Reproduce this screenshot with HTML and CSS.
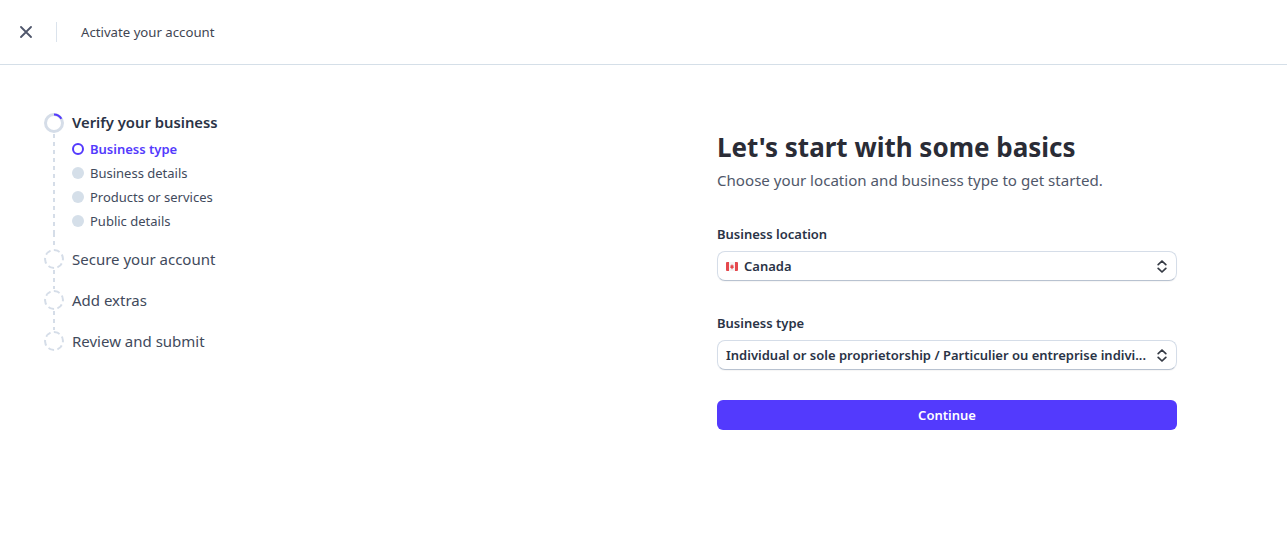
FILE: index.html
```html
<!DOCTYPE html>
<html lang="en">
<head>
    <meta charset="UTF-8">
    <title>Activate your account</title>
    <link rel="stylesheet" href="styles.css">
</head>
<body>

<!-- Top bar -->
<header class="topbar">
    <button class="close-btn" aria-label="Close">
        <svg width="12" height="12" viewBox="0 0 12 12"><path d="M1 1l10 10M11 1L1 11" stroke="#4f566b" stroke-width="1.8" stroke-linecap="round" fill="none"/></svg>
    </button>
    <div class="topbar-divider"></div>
    <span class="topbar-title">Activate your account</span>
</header>

<main class="layout">
    <!-- Steps -->
    <nav class="steps">
        <div class="step step-current">
            <svg class="step-icon" width="20" height="20" viewBox="0 0 20 20">
                <circle cx="10" cy="10" r="8.5" fill="none" stroke="#d5dde8" stroke-width="3"/>
                <path d="M10 1.5A8.5 8.5 0 0 1 17.4 5.8" fill="none" stroke="#533afd" stroke-width="2"/>
            </svg>
            <span class="step-label">Verify your business</span>
        </div>
        <div class="substeps">
            <div class="substep substep-active"><span class="ring"></span>Business type</div>
            <div class="substep"><span class="dot"></span>Business details</div>
            <div class="substep"><span class="dot"></span>Products or services</div>
            <div class="substep"><span class="dot"></span>Public details</div>
        </div>
        <div class="connector connector-short"></div>
        <div class="step">
            <span class="dashed-circle"></span>
            <span>Secure your account</span>
        </div>
        <div class="connector"></div>
        <div class="step">
            <span class="dashed-circle"></span>
            <span>Add extras</span>
        </div>
        <div class="connector"></div>
        <div class="step">
            <span class="dashed-circle"></span>
            <span>Review and submit</span>
        </div>
    </nav>

    <!-- Form -->
    <section class="form-panel">
        <h1>Let's start with some basics</h1>
        <p class="subtitle">Choose your location and business type to get started.</p>

        <div class="field">
            <label>Business location</label>
            <div class="select">
                <svg class="flag" width="12" height="9" viewBox="0 0 12 9">
                    <rect width="12" height="9" rx="1" fill="#f4f4f4"/>
                    <path d="M1 0h2v9H1a1 1 0 0 1-1-1V1a1 1 0 0 1 1-1zM9 0h2a1 1 0 0 1 1 1v7a1 1 0 0 1-1 1H9z" fill="#e5484d"/>
                    <path d="M6 2l.7 1.4.8-.3-.3 1.7.8-.2-.2.9-1.4.9v.9h-.8v-.9l-1.4-.9-.2-.9.8.2-.3-1.7.8.3z" fill="#e5484d"/>
                </svg>
                <span class="select-text">Canada</span>
                <svg class="chevrons" width="10" height="13" viewBox="0 0 10 13"><path d="M1.2 4.6L5 1l3.8 3.6M1.2 8.4L5 12l3.8-3.6" fill="none" stroke="#353a44" stroke-width="1.7" stroke-linecap="round" stroke-linejoin="round"/></svg>
            </div>
        </div>

        <div class="field">
            <label>Business type</label>
            <div class="select">
                <span class="select-text">Individual or sole proprietorship / Particulier ou entreprise indivi...</span>
                <svg class="chevrons" width="10" height="13" viewBox="0 0 10 13"><path d="M1.2 4.6L5 1l3.8 3.6M1.2 8.4L5 12l3.8-3.6" fill="none" stroke="#353a44" stroke-width="1.7" stroke-linecap="round" stroke-linejoin="round"/></svg>
            </div>
        </div>

        <button class="continue">Continue</button>
    </section>
</main>

</body>
</html>
```

FILE: styles.css
```css
* {
    box-sizing: border-box;
}
body {
    margin: 0;
    font-family: "Noto Sans", "Open Sans", sans-serif;
    background: #fff;
    color: #2a3346;
    overflow: hidden;
}

/* Top bar */
.topbar {
    display: flex;
    align-items: center;
    height: 65px;
    padding-left: 20px;
    border-bottom: 1px solid #d5dfe8;
}
.close-btn {
    display: flex;
    padding: 0;
    border: none;
    background: none;
}
.topbar-divider {
    width: 1px;
    height: 20px;
    margin: 0 24px;
    background: #dbe3ec;
}
.topbar-title {
    font-size: 13.2px;
    color: #414552;
}

.layout {
    display: flex;
    padding-left: 44px;
}

/* Steps */
.steps {
    width: 673px;
    padding-top: 47px;
}
.step {
    display: flex;
    align-items: center;
    gap: 8px;
    height: 22px;
    font-size: 15px;
    color: #414a5c;
}
.step-current {
    font-size: 14.8px;
    font-weight: 600;
    color: #2a3346;
}
.step-label {
    margin-bottom: 2px;
}
.step-icon {
    flex: none;
}
.dashed-circle {
    flex: none;
    width: 20px;
    height: 20px;
    border: 2px dashed #d5dde8;
    border-radius: 50%;
}
.substeps {
    margin-left: 9px;
    padding: 3px 0 0 19px;
    background: repeating-linear-gradient(#d5dde8 0 4px, transparent 4px 8px) 0 0 / 2px 100% no-repeat;
}
.substep {
    display: flex;
    align-items: center;
    gap: 6px;
    height: 24px;
    font-size: 13px;
    color: #414a5c;
}
.substep-active {
    font-weight: 600;
    color: #533afd;
}
.ring, .dot {
    flex: none;
    width: 12px;
    height: 12px;
    border-radius: 50%;
}
.ring {
    border: 2px solid #533afd;
}
.dot {
    background: #d5dfe9;
}
.connector {
    width: 2px;
    height: 19px;
    margin-left: 9px;
    background: repeating-linear-gradient(#d5dde8 0 4px, transparent 4px 8px);
}
.connector-short {
    height: 15px;
}

/* Form */
.form-panel {
    width: 460px;
    padding-top: 64px;
}
h1 {
    margin: 0;
    font-size: 26px;
    line-height: 36px;
    font-weight: 700;
    color: #2a2c36;
}
.subtitle {
    margin: 5px 0 35px;
    font-size: 15.1px;
    line-height: 20px;
    color: #50586a;
}
.field + .field {
    margin-top: 33px;
}
.field label {
    display: block;
    margin-bottom: 8px;
    font-size: 13px;
    line-height: 18px;
    font-weight: 600;
    color: #2a3346;
}
.select {
    display: flex;
    align-items: center;
    height: 30px;
    padding: 0 9px 0 8px;
    border: 1px solid #d5dde8;
    border-bottom-color: #b8c2d0;
    border-radius: 8px;
    box-shadow: 0 1px 1px rgba(0, 0, 0, 0.04);
}
.flag {
    flex: none;
    margin-right: 6px;
}
.select-text {
    flex: 1;
    min-width: 0;
    margin-right: 10px;
    font-size: 13px;
    font-weight: 600;
    color: #2a3346;
    white-space: nowrap;
}
.chevrons {
    flex: none;
}
.continue {
    display: block;
    width: 100%;
    height: 30px;
    margin-top: 30px;
    border: none;
    border-radius: 6px;
    background: #533afd;
    color: #fff;
    font-family: inherit;
    font-size: 13px;
    font-weight: 600;
}
```
